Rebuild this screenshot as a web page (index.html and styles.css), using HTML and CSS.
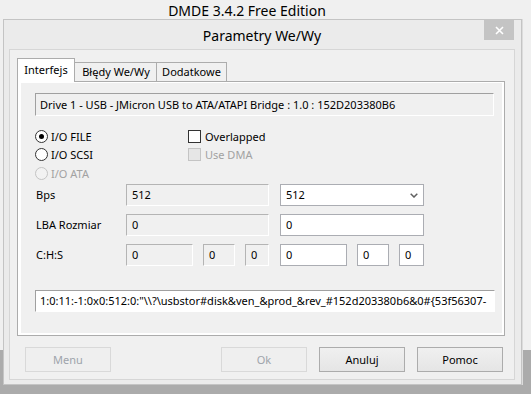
FILE: index.html
```html
<!DOCTYPE html>
<html lang="pl">
<head>
  <meta charset="UTF-8" />
  <title>Parametry We/Wy</title>
  <link rel="stylesheet" href="styles.css">
</head>
<body>
  <div class="screen">
    <div class="app-title">DMDE 3.4.2 Free Edition</div>

    <div class="app-body">
      <div class="edge edge-left"></div>

      <div class="dialog">
        <div class="caption">Parametry We/Wy</div>
        <button class="close" title="Zamknij">
          <svg width="9" height="9" viewBox="0 0 9 9"><path d="M1 1 L8 8 M8 1 L1 8" stroke="#fff" stroke-width="1.6" fill="none"/></svg>
        </button>

        <div class="client">
          <div class="tabs">
            <div class="tab active">Interfejs</div>
            <div class="tab t2">Błędy We/Wy</div>
            <div class="tab t3">Dodatkowe</div>
          </div>

          <div class="panel">
            <div class="page">
              <div class="static drive">Drive 1 - USB - JMicron USB to ATA/ATAPI Bridge : 1.0 : 152D203380B6</div>

              <div class="options">
                <div class="opt-col radios">
                  <div class="opt"><span class="mark radio checked"></span>I/O FILE</div>
                  <div class="opt"><span class="mark radio"></span>I/O SCSI</div>
                  <div class="opt disabled"><span class="mark radio"></span>I/O ATA</div>
                </div>
                <div class="opt-col checks">
                  <div class="opt"><span class="mark check"></span>Overlapped</div>
                  <div class="opt disabled"><span class="mark check"></span>Use DMA</div>
                </div>
              </div>

              <div class="form">
                <div class="lbl">Bps</div>
                <div class="field off">512</div>
                <div class="field combo">512
                  <svg width="8" height="5" viewBox="0 0 8 5"><path d="M0.7 0.7 L4 4 L7.3 0.7" stroke="#606060" stroke-width="1.5" fill="none"/></svg>
                </div>

                <div class="lbl">LBA Rozmiar</div>
                <div class="field off">0</div>
                <div class="field">0</div>

                <div class="lbl">C:H:S</div>
                <div class="chs">
                  <div class="field off c">0</div>
                  <div class="field off h">0</div>
                  <div class="field off s">0</div>
                </div>
                <div class="chs">
                  <div class="field c">0</div>
                  <div class="field h">0</div>
                  <div class="field s">0</div>
                </div>
              </div>

              <div class="static path">1:0:11:-1:0x0:512:0:"\\?\usbstor#disk&amp;ven_&amp;prod_&amp;rev_#152d203380b6&amp;0#{53f56307-</div>
            </div>
          </div>

          <div class="buttons">
            <button class="btn" disabled>Menu</button>
            <button class="btn ok" disabled>Ok</button>
            <button class="btn">Anuluj</button>
            <button class="btn">Pomoc</button>
          </div>
        </div>
      </div>

      <div class="edge edge-right"></div>
    </div>

    <div class="bottom"></div>
  </div>
</body>
</html>
```

FILE: styles.css
```css
* {
  box-sizing: border-box;
}
body {
  margin: 0;
  font-family: "Noto Sans", "DejaVu Sans", sans-serif;
  font-size: 11px;
  color: #000;
}
.screen {
  width: 531px;
  height: 394px;
  overflow: hidden;
  background: #f0f0f0;
}
.app-title {
  height: 19px;
  padding: 3px 37px 0 0;
  line-height: 16px;
  text-align: center;
  font-size: 14px;
  white-space: nowrap;
}
.app-body {
  display: flex;
  height: 366px;
}
.edge-left {
  width: 3px;
  background: linear-gradient(#f0f0f0 331px, #ababab 331px);
}
.edge-right {
  flex: 1;
  border-left: 1px solid #dcdcdc;
  background: linear-gradient(#f0f0f0 331px, #ababab 331px);
}
.bottom {
  height: 9px;
  background: #ababab;
}

/* dialog window */
.dialog {
  position: relative;
  width: 519px;
  padding: 0 6px 4px 5px;
  border: 1px solid #c4c4c4;
  background: #ebebeb;
}
.caption {
  height: 29px;
  line-height: 31px;
  text-align: center;
  font-size: 14px;
}
.close {
  position: absolute;
  top: 0;
  right: 7px;
  width: 30px;
  height: 20px;
  padding: 0;
  border: none;
  background: #c4c4c4;
  display: flex;
  align-items: center;
  justify-content: center;
}
.client {
  height: 331px;
  padding: 8px 9px 0 7px;
  border: 1px solid #d6d6d6;
  background: #f0f0f0;
}

/* tabs */
.tabs {
  display: flex;
  align-items: flex-end;
  height: 23px;
  position: relative;
  z-index: 1;
}
.tab {
  height: 19px;
  margin-left: -1px;
  line-height: 18px;
  text-align: center;
  border: 1px solid #acacac;
  border-bottom: none;
  background: #f0f0f0;
  white-space: nowrap;
}
.tab.active {
  width: 58px;
  height: 24px;
  margin-left: 0;
  margin-bottom: -1px;
  line-height: 21px;
  background: #fff;
  position: relative;
  z-index: 2;
}
.t2 {
  width: 83px;
  padding-left: 1px;
}
.t3 {
  width: 71px;
}
.panel {
  height: 255px;
  padding: 1px 2px 2px 3px;
  border: 1px solid #acacac;
  background: #fff;
}
.page {
  height: 100%;
  padding: 10px 0 0 14px;
  background: #f0f0f0;
}

/* read-only boxes */
.static {
  border: 1px solid;
  border-color: #a0a0a0 #fff #fff #a0a0a0;
  padding-left: 4px;
  white-space: nowrap;
  overflow: hidden;
}
.drive {
  width: 459px;
  height: 23px;
  line-height: 21px;
}
.path {
  width: 460px;
  height: 22px;
  margin-top: 24px;
  line-height: 20px;
  background: #fff;
}

/* radios and checkboxes */
.options {
  display: flex;
  height: 57px;
  margin-top: 11px;
}
.opt-col {
  display: flex;
  flex-direction: column;
}
.radios {
  width: 153px;
}
.opt {
  height: 18.5px;
  display: flex;
  align-items: center;
  gap: 3px;
  white-space: nowrap;
}
.checks .opt {
  gap: 4px;
}
.mark {
  width: 13px;
  height: 13px;
  border: 1px solid #333;
  background: #fff;
  position: relative;
  flex: none;
}
.radio {
  border-radius: 50%;
}
.radio.checked::after {
  content: "";
  position: absolute;
  left: 3px;
  top: 3px;
  width: 5px;
  height: 5px;
  border-radius: 50%;
  background: #000;
}
.opt.disabled {
  color: #a2a2a2;
}
.opt.disabled .mark {
  border-color: #c4c4c4;
  background: #f2f2f2;
}
.checks .opt.disabled .mark {
  background: #e6e6e6;
}

/* form rows */
.form {
  display: grid;
  grid-template-columns: 80px 143px 144px;
  grid-auto-rows: 22px;
  column-gap: 11px;
  row-gap: 8px;
}
.lbl {
  display: flex;
  align-items: center;
  padding-left: 1px;
  padding-bottom: 1px;
  white-space: nowrap;
}
.field {
  height: 22px;
  padding-left: 5px;
  line-height: 20px;
  border: 1px solid #abadb3;
  background: #fff;
}
.field.off {
  border-color: #b4b4b4 #fff #fff #b4b4b4;
  background: #f0f0f0;
}
.combo {
  display: flex;
  align-items: center;
  justify-content: space-between;
  padding-right: 5px;
}
.chs {
  display: flex;
  gap: 10px;
}
.chs .c {
  width: 67px;
}
.chs .h {
  width: 32px;
}
.chs .s {
  flex: 1;
}

/* bottom buttons */
.buttons {
  display: flex;
  gap: 12px;
  margin-top: 11px;
  padding: 0 2px 0 8px;
}
.btn {
  width: 86px;
  height: 25px;
  padding: 0;
  font-family: inherit;
  font-size: 11px;
  color: #000;
  border: 1px solid #acacac;
  background: linear-gradient(#f0f0f0, #e5e5e5);
}
.btn:disabled {
  color: #9ea4ab;
  border-color: #d9d9d9;
  background: #efefef;
}
.ok {
  margin-left: auto;
}
```
